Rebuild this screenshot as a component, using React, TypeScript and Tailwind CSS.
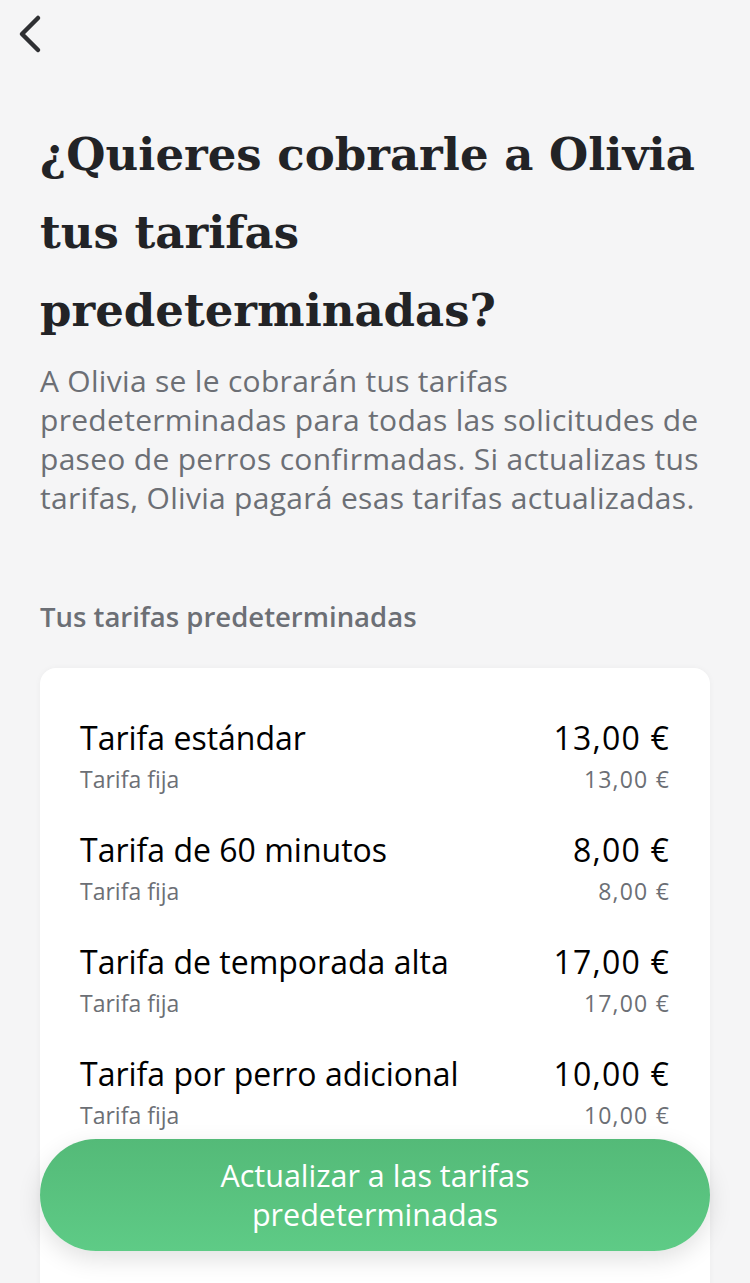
import React from "react";

const rows = [
  { title: "Tarifa estándar", price: "13,00 €" },
  { title: "Tarifa de 60 minutos", price: "8,00 €" },
  { title: "Tarifa de temporada alta", price: "17,00 €" },
  { title: "Tarifa por perro adicional", price: "10,00 €" },
];

export default function App() {
  return (
    <div
      className="relative h-[1283px] w-[750px] overflow-hidden bg-[#f5f5f6]"
      style={{ fontFamily: "'Open Sans', Lato, sans-serif" }}
    >
      <div className="px-[18px] pt-[14px]">
        <svg width="28" height="40" viewBox="0 0 28 40" fill="none">
          <path
            d="M20 4 L4 20 L20 36"
            stroke="#2f3033"
            strokeWidth="4.5"
            strokeLinecap="round"
            strokeLinejoin="round"
          />
        </svg>
      </div>
      <div className="px-[40px]">
        <h1
          className="mt-[62px] text-[45px] font-bold leading-[78px] text-[#222326]"
          style={{ fontFamily: "'DejaVu Serif', 'Liberation Serif', serif" }}
        >
          ¿Quieres cobrarle a Olivia tus tarifas predeterminadas?
        </h1>
        <p className="mt-[11px] whitespace-nowrap text-[30px] leading-[39px] tracking-[0.3px] text-[#6c6f75]">
          A Olivia se le cobrarán tus tarifas
          <br />
          predeterminadas para todas las solicitudes de
          <br />
          paseo de perros confirmadas. Si actualizas tus
          <br />
          tarifas, Olivia pagará esas tarifas actualizadas.
        </p>
        <h2 className="mt-[83px] text-[27.5px] font-semibold leading-[34px] text-[#6c6f75]">
          Tus tarifas predeterminadas
        </h2>
        <div className="mt-[34px] h-[700px] rounded-[16px] bg-white px-[40px] pt-[50px] shadow-[0_0_6px_rgba(0,0,0,0.04)]">
          <div className="flex flex-col gap-[34px]">
            {rows.map((r) => (
              <div key={r.title}>
                <div className="flex justify-between whitespace-nowrap text-[32px] leading-[40px] text-black">
                  <span>{r.title}</span>
                  <span className="tracking-[1.2px]">{r.price}</span>
                </div>
                <div className="mt-[4px] flex justify-between text-[23px] leading-[34px] text-[#6c6f75]">
                  <span>Tarifa fija</span>
                  <span className="tracking-[1.2px]">{r.price}</span>
                </div>
              </div>
            ))}
          </div>
        </div>
      </div>
      <button className="absolute left-[40px] top-[1139px] flex h-[112px] w-[670px] items-center justify-center rounded-full bg-gradient-to-b from-[#54ba78] to-[#5ecb86] px-[40px] text-center text-[30.5px] font-medium leading-[39px] text-white shadow-[0_8px_24px_rgba(0,0,0,0.12)]">
        Actualizar a las tarifas
        <br />
        predeterminadas
      </button>
    </div>
  );
}
